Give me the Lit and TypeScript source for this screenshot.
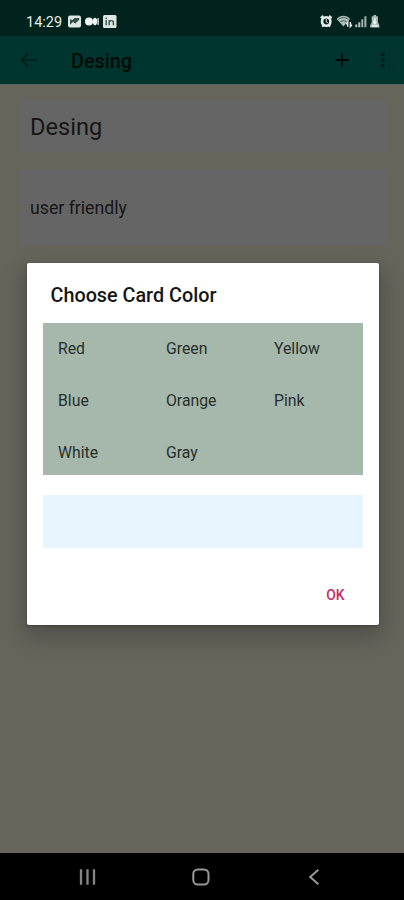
import { LitElement, html, css } from "lit";
import { customElement } from "lit/decorators.js";

const COLORS = ["Red", "Green", "Yellow", "Blue", "Orange", "Pink", "White", "Gray"];

@customElement("status-bar")
class StatusBar extends LitElement {
  static styles = css`
    :host {
      display: flex;
      align-items: center;
      height: 36px;
      padding: 6px 22px 0 26px;
      box-sizing: border-box;
      background: #00231d;
      color: #e6ebea;
      font-size: 14.5px;
    }
    .time { width: 42px; padding-top: 2px; }
    svg { display: block; }
    .notices { margin-top: 1px; }
    .spacer { flex: 1; }
  `;
  render() {
    return html`
      <span class="time">14:29</span>
      <svg class="notices" width="49" height="14" viewBox="0 0 49 14">
        <rect x="0" y="0.5" width="13" height="12" rx="2" fill="#dfe5e3" />
        <path d="M2 9.8 5 7l2.4 1.4 3.8-3.6V3H6.5L4.5 5 2 4.2z" fill="#17352f" opacity=".85" />
        <circle cx="21" cy="6.5" r="4" fill="#f2f5f4" />
        <ellipse cx="27" cy="6.5" rx="2.1" ry="3.7" fill="#f2f5f4" />
        <rect x="29.4" y="3.1" width="1.4" height="6.8" fill="#dfe5e3" />
        <rect x="35" y="0" width="13.5" height="13" rx="1.5" fill="#dfe5e3" />
        <path d="M38.2 5v5.3M38.2 2.5v1.4M41.2 5v5.3M41.2 7.5c0-2.5 4.2-2.6 4.2 0v2.8" fill="none" stroke="#35504a" stroke-width="1.4" />
      </svg>
      <span class="spacer"></span>
      <svg width="62" height="15" viewBox="0 0 62 15">
        <g fill="none" stroke="#e9eeec">
          <circle cx="6.2" cy="7.5" r="4.2" stroke-width="2.6" />
          <path d="M6.2 5v2.8l1.6 1" stroke-width="1" />
          <path d="M.7 3.9 3.3 1.7M11.7 3.9 9.1 1.7M2.2 12.7l1.5-1.6M10.2 12.7l-1.5-1.6" stroke-width="1.9" />
        </g>
        <path d="M16.7 5C20.3.8 26.5.8 30.1 5l-6.7 7.6z" fill="#dfe5e3" opacity=".8" />
        <path d="M18.5 5.3c3-2.3 6.8-2.3 9.8 0M20.3 7.9c2-1.6 4.3-1.6 6.3 0" fill="none" stroke="#36514b" stroke-width=".9" />
        <path d="M25.8 14V8.9h6V14z" fill="#00231d" />
        <path d="M27.7 12.8V8.5l-1.4 1.7M30.4 8v4.5l1.5-1.7" fill="none" stroke="#e9eeec" stroke-width="1.5" />
        <path d="M35.3 10.6h2v2.7h-2zM38.3 8.2h2v5.1h-2z" fill="#b9c4c1" />
        <path d="M41.3 5.3h2v8h-2zM44.4 2.2h2v11.1h-2z" fill="#a2b0ac" />
        <path d="M51.7 2.3h1.8V1h2.6v1.3h1.8v5.9l1.5 3v2.3h-9.2v-2.3l1.5-3z" fill="#aebbb7" />
        <path d="M54.8 4.2v5.3M53.4 7.8l1.4 1.7 1.4-1.7M52 12h5.6" fill="none" stroke="#f5f7f6" stroke-width="1.5" />
      </svg>
    `;
  }
}

@customElement("app-bar")
class AppBar extends LitElement {
  static styles = css`
    :host {
      display: flex;
      align-items: center;
      height: 48px;
      padding: 0 14px 0 20px;
      box-sizing: border-box;
      background: #00352e;
      color: #000b09;
    }
    svg { display: block; }
    .title {
      flex: 1;
      margin: 3px 0 0 34px;
      font-size: 19.8px;
      font-weight: 500;
      line-height: 24px;
    }
    .more { margin-left: 27px; }
  `;
  render() {
    return html`
      <svg width="17" height="16" viewBox="0 0 17 16">
        <path d="M16.5 8H2M8.3 1.5 1.8 8l6.5 6.5" fill="none" stroke="#001c17" stroke-width="1.7" />
      </svg>
      <span class="title">Desing</span>
      <svg width="14" height="14" viewBox="0 0 14 14">
        <path d="M7 .5v13M.5 7h13" stroke="#000b09" stroke-width="1.8" />
      </svg>
      <svg class="more" width="14" height="16" viewBox="0 0 14 16">
        <g fill="#001a16">
          <circle cx="7" cy="2.4" r="1.7" />
          <circle cx="7" cy="8" r="1.7" />
          <circle cx="7" cy="13.6" r="1.7" />
        </g>
      </svg>
    `;
  }
}

@customElement("color-dialog")
class ColorDialog extends LitElement {
  static styles = css`
    :host {
      display: flex;
      flex-direction: column;
      box-sizing: border-box;
      width: 352px;
      height: 362px;
      padding: 0 16px;
      border-radius: 2px;
      background: #fff;
      box-shadow: 0 9px 22px 3px rgba(0, 0, 0, 0.22), 0 1px 3px rgba(0, 0, 0, 0.25);
    }
    .heading {
      height: 60px;
      line-height: 66px;
      padding-left: 8px;
      font-size: 19.8px;
      font-weight: 500;
      color: #161616;
    }
    .grid {
      display: grid;
      grid-template-columns: 108px 108px 1fr;
      grid-template-rows: 50px 54px 48px;
      height: 152px;
      background: #a6b7ac;
    }
    .option {
      display: flex;
      align-items: center;
      padding-left: 15.5px;
      font-size: 15.8px;
      color: #26302b;
    }
    .option:nth-child(n + 7) { padding-top: 2px; }
    .preview {
      height: 53px;
      margin-top: 20px;
      background: #e8f5fe;
    }
    .actions {
      display: flex;
      justify-content: flex-end;
      padding: 38px 18px 0 0;
    }
    .ok {
      font-size: 13.8px;
      font-weight: 500;
      line-height: 18px;
      color: #c92a62;
    }
  `;
  render() {
    return html`
      <div class="heading">Choose Card Color</div>
      <div class="grid">${COLORS.map((c) => html`<div class="option">${c}</div>`)}</div>
      <div class="preview"></div>
      <div class="actions"><span class="ok">OK</span></div>
    `;
  }
}

@customElement("nav-bar")
class NavBar extends LitElement {
  static styles = css`
    :host {
      display: flex;
      justify-content: space-between;
      align-items: center;
      height: 47px;
      padding: 0 81px 0 79px;
      box-sizing: border-box;
      background: #000;
    }
    svg { display: block; }
  `;
  render() {
    return html`
      <svg width="18" height="18" viewBox="0 0 18 18">
        <path d="M2 1.3v15.4M8.5 1.3v15.4M15 1.3v15.4" stroke="#858585" stroke-width="2.3" />
      </svg>
      <svg width="18" height="18" viewBox="0 0 18 18">
        <rect x="1.3" y="1.5" width="15.2" height="15" rx="4.5" fill="none" stroke="#999" stroke-width="2" />
      </svg>
      <svg width="18" height="18" viewBox="0 0 18 18">
        <path d="M13.3 1.7 5.2 9l8.1 7.3" fill="none" stroke="#999" stroke-width="2" />
      </svg>
    `;
  }
}

@customElement("app-root")
class AppRoot extends LitElement {
  static styles = css`
    :host {
      display: flex;
      flex-direction: column;
      position: relative;
      width: 404px;
      height: 900px;
      overflow: hidden;
      background: #66655c;
      font-family: Roboto, "Liberation Sans", sans-serif;
    }
    .content {
      flex: 1;
      padding: 15px 18px 0 20px;
      border-top: 1px solid #59665f;
    }
    .field {
      display: flex;
      align-items: center;
      box-sizing: border-box;
      padding-left: 10px;
      border-radius: 3px;
      background: #656565;
      color: #161616;
    }
    .name {
      height: 52px;
      padding-top: 2px;
      font-size: 23.6px;
    }
    .note {
      height: 76px;
      margin-top: 17px;
      padding-top: 2px;
      font-size: 17.7px;
    }
    .dialog {
      position: absolute;
      left: 26.5px;
      top: 263px;
    }
  `;
  render() {
    return html`
      <status-bar></status-bar>
      <app-bar></app-bar>
      <main class="content">
        <div class="field name">Desing</div>
        <div class="field note">user friendly</div>
      </main>
      <nav-bar></nav-bar>
      <color-dialog class="dialog"></color-dialog>
    `;
  }
}
